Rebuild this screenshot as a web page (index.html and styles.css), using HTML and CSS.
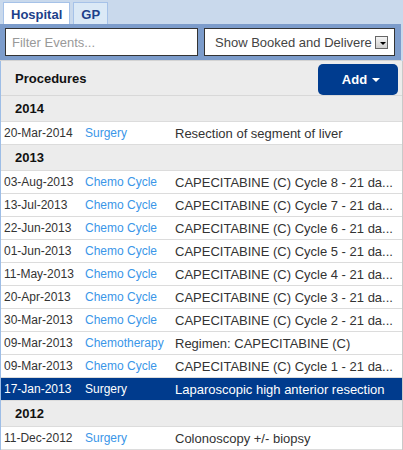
FILE: index.html
```html
<!DOCTYPE html>
<html lang="en">
<head>
    <meta charset="UTF-8">
    <meta name="viewport" content="width=device-width, initial-scale=1.0">
    <title>Events</title>
    <link rel="stylesheet" href="styles.css">
</head>
<body>

    <div class="tabs">
        <div class="tab active">Hospital</div>
        <div class="tab">GP</div>
    </div>

    <div class="filterbar">
        <input class="filter" type="text" placeholder="Filter Events...">
        <div class="select">
            <span class="select-text">Show Booked and Delivere</span>
            <span class="select-arrow"></span>
        </div>
    </div>

    <div class="panel">
        <div class="panel-head">
            <span class="title">Procedures</span>
            <button class="add">Add <span class="caret"></span></button>
        </div>

        <div class="year">2014</div>
        <div class="row"><span class="date">20-Mar-2014</span><span class="type">Surgery</span><span class="desc">Resection of segment of liver</span></div>

        <div class="year">2013</div>
        <div class="row"><span class="date">03-Aug-2013</span><span class="type">Chemo Cycle</span><span class="desc">CAPECITABINE (C) Cycle 8 - 21 da...</span></div>
        <div class="row"><span class="date">13-Jul-2013</span><span class="type">Chemo Cycle</span><span class="desc">CAPECITABINE (C) Cycle 7 - 21 da...</span></div>
        <div class="row"><span class="date">22-Jun-2013</span><span class="type">Chemo Cycle</span><span class="desc">CAPECITABINE (C) Cycle 6 - 21 da...</span></div>
        <div class="row"><span class="date">01-Jun-2013</span><span class="type">Chemo Cycle</span><span class="desc">CAPECITABINE (C) Cycle 5 - 21 da...</span></div>
        <div class="row"><span class="date">11-May-2013</span><span class="type">Chemo Cycle</span><span class="desc">CAPECITABINE (C) Cycle 4 - 21 da...</span></div>
        <div class="row"><span class="date">20-Apr-2013</span><span class="type">Chemo Cycle</span><span class="desc">CAPECITABINE (C) Cycle 3 - 21 da...</span></div>
        <div class="row"><span class="date">30-Mar-2013</span><span class="type">Chemo Cycle</span><span class="desc">CAPECITABINE (C) Cycle 2 - 21 da...</span></div>
        <div class="row"><span class="date">09-Mar-2013</span><span class="type">Chemotherapy</span><span class="desc">Regimen: CAPECITABINE (C)</span></div>
        <div class="row"><span class="date">09-Mar-2013</span><span class="type">Chemo Cycle</span><span class="desc">CAPECITABINE (C) Cycle 1 - 21 da...</span></div>
        <div class="row selected"><span class="date">17-Jan-2013</span><span class="type">Surgery</span><span class="desc">Laparoscopic high anterior resection</span></div>

        <div class="year">2012</div>
        <div class="row"><span class="date">11-Dec-2012</span><span class="type">Surgery</span><span class="desc">Colonoscopy +/- biopsy</span></div>
    </div>

</body>
</html>
```

FILE: styles.css
```css
body {
    margin: 0;
    font-family: "Liberation Sans", Arial, sans-serif;
    background-color: #c9d9ec;
    color: #333;
    width: 403px;
    overflow: hidden;
}
.tabs {
    display: flex;
    gap: 3px;
    padding: 2px 0 0 3px;
    height: 22px;
}
.tab {
    font-size: 13px;
    font-weight: bold;
    color: #1d3f8a;
    background-color: #dbe9f6;
    border: 1px solid #a6c2e8;
    border-bottom: none;
    padding: 4px 7px 0 7px;
}
.tab.active {
    background-color: #fff;
}
.filterbar {
    display: flex;
    gap: 6px;
    background-color: #7c9ccb;
    padding: 4px 6px 4px 5px;
    height: 28px;
    border-bottom: 1px solid #d3d3d3;
    width: 390px;
}
.filter {
    box-sizing: border-box;
    width: 193px;
    height: 28px;
    margin: 0;
    border: 1px solid #333;
    padding: 0 6px;
    font-family: "Liberation Sans", Arial, sans-serif;
    font-size: 13px;
    color: #333;
    outline: none;
}
.filter::placeholder {
    color: #999;
}
.select {
    box-sizing: border-box;
    width: 191px;
    height: 28px;
    border: 1px solid #333;
    background-color: #fff;
    display: flex;
    align-items: center;
    padding: 0 6px 0 10px;
    font-size: 13px;
    color: #444;
}
.select-text {
    flex: 1;
    white-space: nowrap;
}
.select-arrow {
    position: relative;
    width: 14px;
    height: 11px;
    border: 1px solid #666;
    background: linear-gradient(#f4f4f4, #cfcfcf);
    margin-left: 3px;
}
.select-arrow::after {
    content: "";
    position: absolute;
    left: 4px;
    top: 5px;
    border-left: 3px solid transparent;
    border-right: 3px solid transparent;
    border-top: 3px solid #000;
}
.panel {
    background-color: #fff;
    border-left: 1px solid #9dbde6;
    border-right: 1px solid #c9c9c9;
    width: 401px;
}
.panel-head {
    display: flex;
    justify-content: space-between;
    align-items: center;
    background-color: #ececec;
    height: 34px;
    border-bottom: 1px solid #d8d8d8;
    padding: 0 4px 0 14px;
}
.title {
    font-size: 13px;
    font-weight: bold;
    color: #111;
}
.add {
    background-color: #003c8f;
    color: #fff;
    border: none;
    border-radius: 5px;
    width: 80px;
    height: 31px;
    margin-top: 3px;
    font-family: "Liberation Sans", Arial, sans-serif;
    font-size: 13px;
    font-weight: bold;
    display: flex;
    align-items: center;
    justify-content: center;
    gap: 5px;
    padding: 0 0 0 6px;
    cursor: pointer;
}
.caret {
    border-left: 4px solid transparent;
    border-right: 4px solid transparent;
    border-top: 4px solid #fff;
    margin-top: 1px;
}
.year {
    background-color: #ececec;
    height: 25px;
    line-height: 25px;
    border-bottom: 1px solid #dcdcdc;
    padding-left: 14px;
    font-size: 13px;
    font-weight: bold;
    color: #111;
}
.row {
    display: flex;
    align-items: center;
    height: 22px;
    border-bottom: 1px solid #dcdcdc;
    padding: 0 5px 0 3px;
    font-size: 12px;
    white-space: nowrap;
}
.date {
    width: 81px;
    flex-shrink: 0;
}
.type {
    width: 90px;
    flex-shrink: 0;
    color: #3a96e8;
}
.desc {
    flex: 1;
    font-size: 13px;
    overflow: hidden;
    text-overflow: ellipsis;
}
.row.selected {
    background-color: #003b8d;
    color: #fff;
}
.row.selected .type {
    color: #fff;
}
```
